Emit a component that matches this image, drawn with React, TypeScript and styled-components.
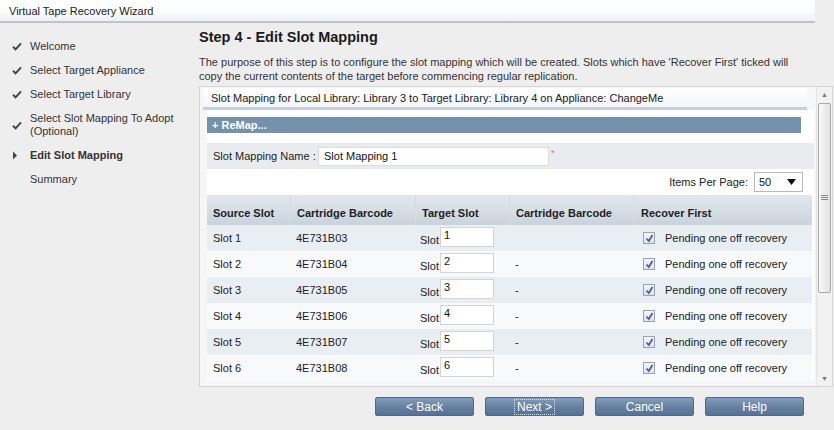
import React, { FC } from 'react';
import styled, { createGlobalStyle, css } from 'styled-components';

const GlobalStyle = createGlobalStyle`
  body {
    margin: 0;
    background: #efeeee;
    font-family: "Liberation Sans", Arial, sans-serif;
    font-size: 11px;
    color: #333;
  }
`;

const FLEX_CENTER = css`
  display: flex;
  align-items: center;
`;

const Page = styled.div`
  width: 834px;
  height: 430px;
  overflow: hidden;
  background: #efeeee;
`;

const TitleBar = styled.div`
  ${FLEX_CENTER};
  width: 806px;
  height: 21px;
  padding-left: 9px;
  background: linear-gradient(#ffffff 0%, #fbfcfd 55%, #edf0f4 100%);
  border-bottom: 2px solid #bac3cf;
  color: #222;
`;

const Body = styled.div`
  display: flex;
`;

const Sidebar = styled.ul`
  list-style: none;
  margin: 0;
  padding: 11px 0 0 0;
  width: 199px;
`;

const NavItem = styled.li<{ current?: boolean }>`
  ${FLEX_CENTER};
  padding: 6px 0 5px 12px;
  font-weight: ${(p) => (p.current ? 'bold' : 'normal')};
  color: #333;
  line-height: 13px;
`;

const NavIcon = styled.span`
  ${FLEX_CENTER};
  width: 18px;
  flex-shrink: 0;
`;

const NavLabel = styled.span`
  width: 150px;
`;

const Main = styled.div`
  width: 635px;
  padding-top: 5px;
`;

const Heading = styled.h1`
  margin: 0;
  height: 18px;
  font-size: 14.5px;
  font-weight: bold;
  color: #1a1a1a;
  line-height: 18px;
`;

const Description = styled.p`
  margin: 9px 0 0 0;
  line-height: 14px;
  color: #333;
  width: 615px;
`;

const Panel = styled.div`
  display: flex;
  margin-top: 3px;
  width: 632px;
  height: 299px;
  border: 1px solid #d6d6d6;
  background: #f6f6f6;
  overflow: hidden;
`;

const ScrollArea = styled.div`
  width: 617px;
  padding-left: 3px;
`;

const PanelHeader = styled.div`
  ${FLEX_CENTER};
  margin-top: 1px;
  width: 596px;
  height: 19px;
  padding-left: 8px;
  background: linear-gradient(#ffffff, #f3f5f8);
  border-bottom: 3px solid #c6cfda;
  color: #222;
`;

const Content = styled.div`
  margin-left: 4px;
  padding-top: 7px;
  background: #ffffff;
  width: 607px;
`;

const ReMapBar = styled.div`
  ${FLEX_CENTER};
  width: 589px;
  height: 16px;
  padding-left: 5px;
  background: #7591ab;
  color: #ffffff;
  font-weight: bold;
`;

const NameRow = styled.div`
  ${FLEX_CENTER};
  margin-top: 10px;
  height: 26px;
  padding-left: 6px;
  background: #e9ecef;
`;

const NameLabel = styled.span`
  width: 105px;
  color: #222;
`;

const TextInput = styled.div<{ w: number }>`
  ${FLEX_CENTER};
  width: ${(p) => p.w}px;
  height: 19px;
  padding-left: 5px;
  box-sizing: border-box;
  background: #ffffff;
  border: 1px solid #dcdcdc;
  color: #111;
`;

const Required = styled.span`
  align-self: flex-start;
  margin: 5px 0 0 2px;
  color: #e07070;
  font-size: 9px;
`;

const PagerRow = styled.div`
  display: flex;
  justify-content: flex-end;
  align-items: center;
  height: 26px;
  padding-right: 11px;
`;

const PagerLabel = styled.span`
  margin-right: 6px;
  color: #222;
`;

const Select = styled.div`
  ${FLEX_CENTER};
  justify-content: space-between;
  width: 49px;
  height: 20px;
  box-sizing: border-box;
  padding: 0 6px 0 4px;
  background: #ffffff;
  border: 1px solid #b9b9b9;
  color: #111;
`;

const Table = styled.div`
  width: 605px;
`;

const COLS = '83px 125px 94px 125px 178px';

const HeaderRow = styled.div`
  display: grid;
  grid-template-columns: ${COLS};
  height: 30px;
  background: linear-gradient(#e3e8ee, #c9d3dd);
`;

const HeaderCell = styled.div<{ first?: boolean }>`
  ${FLEX_CENTER};
  padding: 6px 0 0 6px;
  font-weight: bold;
  color: #222;
  border-left: ${(p) => (p.first ? 'none' : '1px solid #d2dae3')};
`;

const Row = styled.div<{ odd: boolean }>`
  display: grid;
  grid-template-columns: ${COLS};
  height: 26px;
  background: ${(p) => (p.odd ? '#e9eef3' : '#f7f9fa')};
`;

const Cell = styled.div`
  ${FLEX_CENTER};
  padding-left: 6px;
  color: #222;
`;

const SlotPrefix = styled.span`
  margin: 4px 1px 0 -1px;
`;

const SlotInput = styled.div`
  width: 54px;
  height: 20px;
  box-sizing: border-box;
  padding: 1px 0 0 3px;
  background: #ffffff;
  border: 1px solid #d4d4d4;
  color: #111;
  align-self: flex-start;
  margin-top: 2px;
`;

const CheckBox = styled.span`
  ${FLEX_CENTER};
  justify-content: center;
  width: 12px;
  height: 12px;
  box-sizing: border-box;
  margin: 0 10px 0 3px;
  border: 1px solid #9aa3ad;
  background: linear-gradient(#f4f5f7, #dfe3e8);
`;

const ScrollBar = styled.div`
  display: flex;
  flex-direction: column;
  align-items: center;
  width: 15px;
  background: #f2f2f2;
  border-left: 1px solid #e4e4e4;
`;

const ScrollArrow = styled.div`
  ${FLEX_CENTER};
  justify-content: center;
  height: 15px;
  width: 15px;
  color: #777;
  font-size: 7px;
`;

const Thumb = styled.div`
  ${FLEX_CENTER};
  justify-content: center;
  margin-top: 1px;
  width: 13px;
  height: 190px;
  box-sizing: border-box;
  border: 1px solid #a9a9a9;
  border-radius: 2px;
  background: linear-gradient(90deg, #f9f9f9, #e2e2e2);
`;

const Track = styled.div`
  flex: 1;
`;

const ButtonBar = styled.div`
  display: flex;
  gap: 11px;
  margin: 10px 0 0 176px;
`;

const Button = styled.div<{ focused?: boolean }>`
  ${FLEX_CENTER};
  justify-content: center;
  width: 99px;
  height: 19px;
  border-radius: 3px;
  background: linear-gradient(#87a0bd 0%, #6882a3 50%, #546f94 100%);
  box-shadow: inset 0 0 0 1px #4d6a8e;
  color: #ffffff;
  font-size: 12px;
  span {
    padding: 0 2px;
    outline: ${(p) => (p.focused ? '1px dotted #d8e2ee' : 'none')};
  }
`;

const Check: FC = () => (
  <svg width="10" height="9" viewBox="0 0 10 9">
    <path d="M1 4.8 L3.6 7.4 L9 1.4" fill="none" stroke="#444" strokeWidth="2" />
  </svg>
);

const Arrow: FC = () => (
  <svg width="6" height="9" viewBox="0 0 6 9">
    <path d="M1 0.5 L5 4.5 L1 8.5 Z" fill="#444" />
  </svg>
);

const Tick: FC = () => (
  <svg width="9" height="9" viewBox="0 0 9 9">
    <path d="M1.5 4.5 L3.8 7 L7.5 1" fill="none" stroke="#4a5fa8" strokeWidth="1.8" />
  </svg>
);

const navItems = [
  { label: 'Welcome', done: true },
  { label: 'Select Target Appliance', done: true },
  { label: 'Select Target Library', done: true },
  { label: 'Select Slot Mapping To Adopt (Optional)', done: true },
  { label: 'Edit Slot Mapping', current: true },
  { label: 'Summary' },
];

const rows = [
  { src: 'Slot 1', barcode: '4E731B03', target: '1', tBarcode: '' },
  { src: 'Slot 2', barcode: '4E731B04', target: '2', tBarcode: '-' },
  { src: 'Slot 3', barcode: '4E731B05', target: '3', tBarcode: '-' },
  { src: 'Slot 4', barcode: '4E731B06', target: '4', tBarcode: '-' },
  { src: 'Slot 5', barcode: '4E731B07', target: '5', tBarcode: '-' },
  { src: 'Slot 6', barcode: '4E731B08', target: '6', tBarcode: '-' },
];

const App: FC = () => {
  return (
    <Page>
      <GlobalStyle />
      <TitleBar>Virtual Tape Recovery Wizard</TitleBar>
      <Body>
        <Sidebar>
          {navItems.map((n) => (
            <NavItem key={n.label} current={n.current}>
              <NavIcon>{n.done ? <Check /> : n.current ? <Arrow /> : null}</NavIcon>
              <NavLabel>{n.label}</NavLabel>
            </NavItem>
          ))}
        </Sidebar>
        <Main>
          <Heading>Step 4 - Edit Slot Mapping</Heading>
          <Description>
            The purpose of this step is to configure the slot mapping which will be created. Slots which have 'Recover First' ticked will
            copy the current contents of the target before commencing regular replication.
          </Description>
          <Panel>
            <ScrollArea>
              <PanelHeader>Slot Mapping for Local Library: Library 3 to Target Library: Library 4 on Appliance: ChangeMe</PanelHeader>
              <Content>
                <ReMapBar>+ ReMap...</ReMapBar>
                <NameRow>
                  <NameLabel>Slot Mapping Name :</NameLabel>
                  <TextInput w={231}>Slot Mapping 1</TextInput>
                  <Required>*</Required>
                </NameRow>
                <PagerRow>
                  <PagerLabel>Items Per Page:</PagerLabel>
                  <Select>
                    50
                    <svg width="9" height="6" viewBox="0 0 9 6">
                      <path d="M0 0 H9 L4.5 6 Z" fill="#111" />
                    </svg>
                  </Select>
                </PagerRow>
                <Table>
                  <HeaderRow>
                    <HeaderCell first>Source Slot</HeaderCell>
                    <HeaderCell>Cartridge Barcode</HeaderCell>
                    <HeaderCell>Target Slot</HeaderCell>
                    <HeaderCell>Cartridge Barcode</HeaderCell>
                    <HeaderCell>Recover First</HeaderCell>
                  </HeaderRow>
                  {rows.map((r, i) => (
                    <Row key={r.src} odd={i % 2 === 0}>
                      <Cell>{r.src}</Cell>
                      <Cell>{r.barcode}</Cell>
                      <Cell>
                        <SlotPrefix>Slot</SlotPrefix>
                        <SlotInput>{r.target}</SlotInput>
                      </Cell>
                      <Cell>{r.tBarcode}</Cell>
                      <Cell>
                        <CheckBox><Tick /></CheckBox>
                        Pending one off recovery
                      </Cell>
                    </Row>
                  ))}
                </Table>
              </Content>
            </ScrollArea>
            <ScrollBar>
              <ScrollArrow>▲</ScrollArrow>
              <Thumb>
                <svg width="7" height="6" viewBox="0 0 7 6">
                  <path d="M0 0.5 H7 M0 2.5 H7 M0 4.5 H7" stroke="#888" strokeWidth="1" />
                </svg>
              </Thumb>
              <Track />
              <ScrollArrow>▼</ScrollArrow>
            </ScrollBar>
          </Panel>
          <ButtonBar>
            <Button><span>&lt; Back</span></Button>
            <Button focused><span>Next &gt;</span></Button>
            <Button><span>Cancel</span></Button>
            <Button><span>Help</span></Button>
          </ButtonBar>
        </Main>
      </Body>
    </Page>
  );
};

export default App;
